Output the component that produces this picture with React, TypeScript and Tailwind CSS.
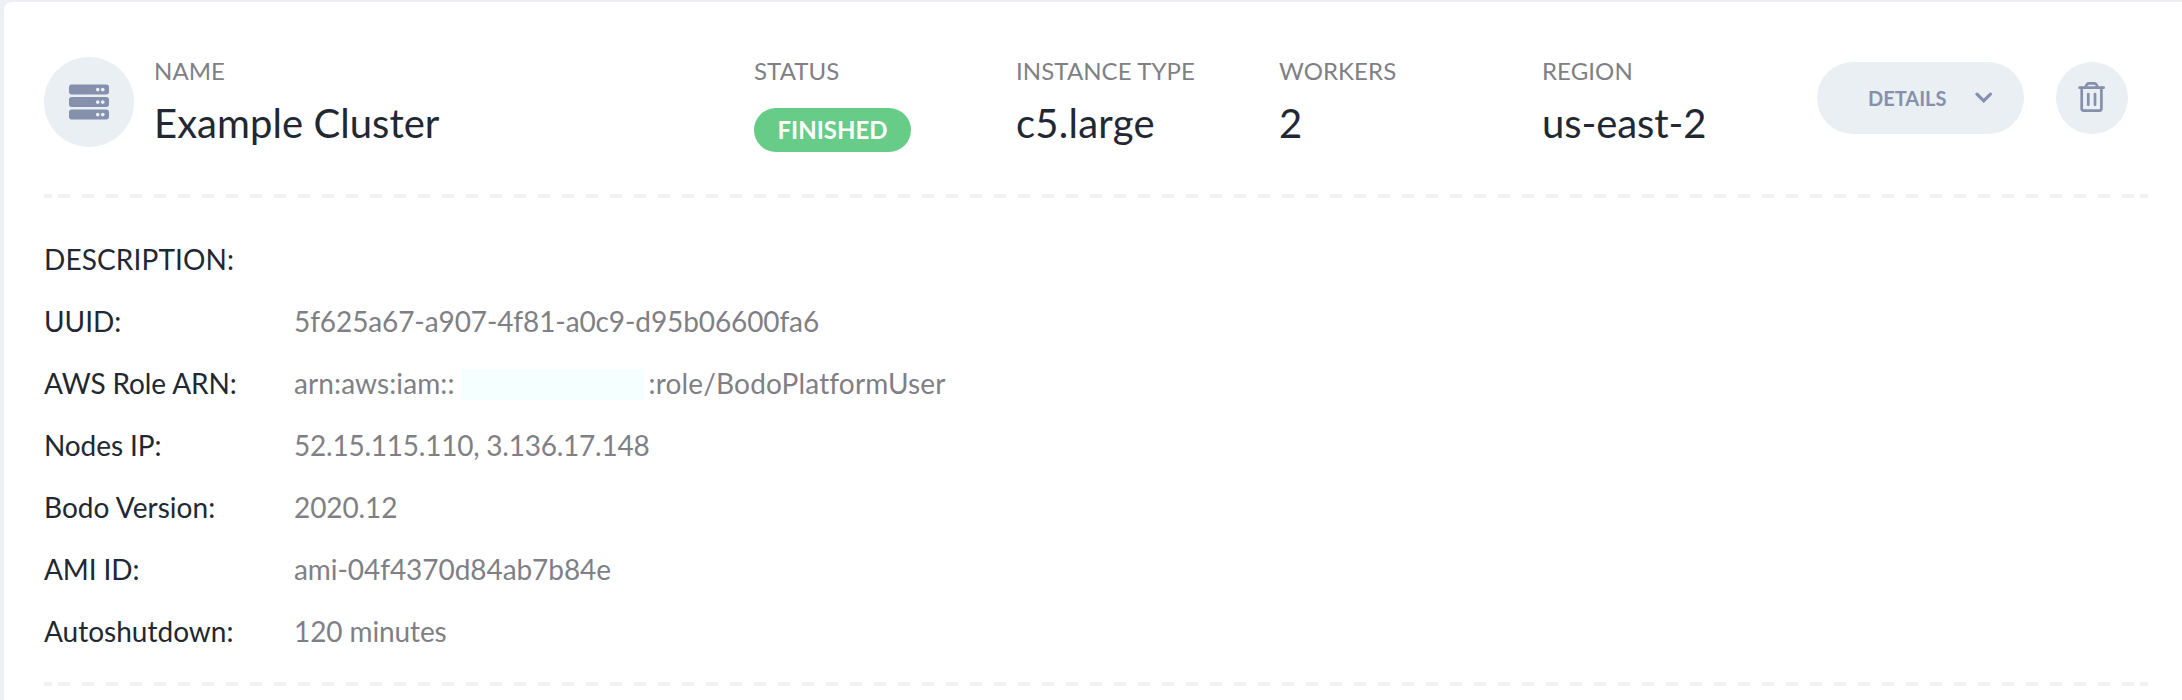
import { FaServer } from "react-icons/fa";

const columns = [
  { label: "INSTANCE TYPE", value: "c5.large", tracking: "tracking-[0.25px]" },
  { label: "WORKERS", value: "2", tracking: "" },
  { label: "REGION", value: "us-east-2", tracking: "tracking-[-0.08px]" },
];

type Detail = {
  label: string;
  value: string;
  suffix?: string;
  labelTracking?: string;
  valueTracking?: string;
};

const details: Detail[] = [
  { label: "DESCRIPTION:", value: "", labelTracking: "tracking-[0.12px]" },
  { label: "UUID:", value: "5f625a67-a907-4f81-a0c9-d95b06600fa6", valueTracking: "tracking-[-0.1px]" },
  {
    label: "AWS Role ARN:",
    value: "arn:aws:iam::",
    suffix: ":role/BodoPlatformUser",
    labelTracking: "tracking-[-0.1px]",
    valueTracking: "tracking-[0.1px]",
  },
  { label: "Nodes IP:", value: "52.15.115.110, 3.136.17.148", labelTracking: "tracking-[-0.1px]", valueTracking: "tracking-[-0.23px]" },
  { label: "Bodo Version:", value: "2020.12", labelTracking: "tracking-[0.05px]", valueTracking: "tracking-[-0.1px]" },
  { label: "AMI ID:", value: "ami-04f4370d84ab7b84e", labelTracking: "tracking-[-0.1px]", valueTracking: "tracking-[-0.06px]" },
  { label: "Autoshutdown:", value: "120 minutes", valueTracking: "tracking-[-0.1px]" },
];

function DashedLine() {
  return (
    <div className="flex h-1 w-[2104px] gap-1.5">
      <div className="w-2 bg-[#f1f1f1]" />
      <div className="flex-1 bg-[repeating-linear-gradient(90deg,#f1f1f1_0_12px,transparent_12px_24px)]" />
      <div className="w-2 bg-[#f1f1f1]" />
    </div>
  );
}

function Label({ children }: { children: string }) {
  return <div className="text-2xl leading-8 tracking-[0.08px] text-[#7f8085]">{children}</div>;
}

function Value({ children, className = "" }: { children: string; className?: string }) {
  return <div className={`mt-3 text-[40px] leading-[48px] text-[#222831] ${className}`}>{children}</div>;
}

function ChevronIcon() {
  return (
    <svg width="20" height="12" viewBox="0 0 20 12" fill="none" stroke="#8590ad" strokeWidth="3.2" strokeLinecap="round">
      <path d="M3 2.200L9.700 8.800L16.400 2.200" />
    </svg>
  );
}

function TrashIcon() {
  return (
    <svg width="28" height="32" viewBox="0 0 28 32" fill="none" stroke="#8590ad" strokeWidth="2.7" strokeLinecap="round">
      <path d="M1.600 5.700h24" />
      <path d="M7.500 5.200Q8.800 1.400 10.800 1.400H16.400Q18.400 1.400 19.700 5.200" />
      <path d="M3.700 5.700V26.600q0 2 2 2H21.400q2 0 2-2V5.700" />
      <path d="M10.300 12v10.800M17 12v10.800" />
    </svg>
  );
}

export default function App() {
  return (
    <div className="h-[700px] w-full overflow-hidden bg-[#efeff6] pt-0.5 pl-1 font-['Lato',sans-serif] [font-variant-ligatures:none]">
      <main className="h-full rounded-tl-lg bg-white pl-10">
        <header className="flex h-48 w-[2104px] pt-[45px]">
          <div className="mt-2.5 flex size-[90px] shrink-0 items-center justify-center rounded-full bg-[#e9eff3]">
            <FaServer className="size-10 text-[#8590ad]" />
          </div>
          <div className="ml-5 w-[600px] shrink-0 pt-2">
            <Label>NAME</Label>
            <Value className="tracking-[0.05px]">Example Cluster</Value>
          </div>
          <div className="w-[262px] shrink-0 pt-2">
            <Label>STATUS</Label>
            <div className="mt-[21px] flex h-11 w-[157px] items-center justify-center rounded-full bg-[#66cc87] text-2xl font-bold text-white">
              FINISHED
            </div>
          </div>
          {columns.map((c) => (
            <div key={c.label} className="w-[263px] shrink-0 pt-2">
              <Label>{c.label}</Label>
              <Value className={c.tracking}>{c.value}</Value>
            </div>
          ))}
          <button className="mt-[15px] ml-3 flex h-[72px] w-[207px] shrink-0 items-center rounded-full bg-[#e9eff3] pl-[51px] text-xl font-bold text-[#8590ad]">
            <span className="w-[106px] text-left">DETAILS</span>
            <ChevronIcon />
          </button>
          <button className="mt-[15px] ml-8 flex size-[72px] shrink-0 items-center justify-center rounded-full bg-[#e9eff3]">
            <TrashIcon />
          </button>
        </header>
        <DashedLine />
        <dl className="flex flex-col pt-[30px] text-[28px]">
          {details.map((d) => (
            <div key={d.label} className="flex h-[62px] items-center">
              <dt className={`w-[250px] text-[#222831] ${d.labelTracking ?? ""}`}>{d.label}</dt>
              <dd className={`flex items-center text-[#7f8085] ${d.valueTracking ?? ""}`}>
                {d.value}
                {d.suffix && (
                  <>
                    <span className="mt-[3px] mr-[5px] ml-1.5 h-[31px] w-[183px] bg-[#f5ffff]" />
                    <span className="tracking-[0.16px]">{d.suffix}</span>
                  </>
                )}
              </dd>
            </div>
          ))}
        </dl>
        <div className="pt-5">
          <DashedLine />
        </div>
      </main>
    </div>
  );
}
